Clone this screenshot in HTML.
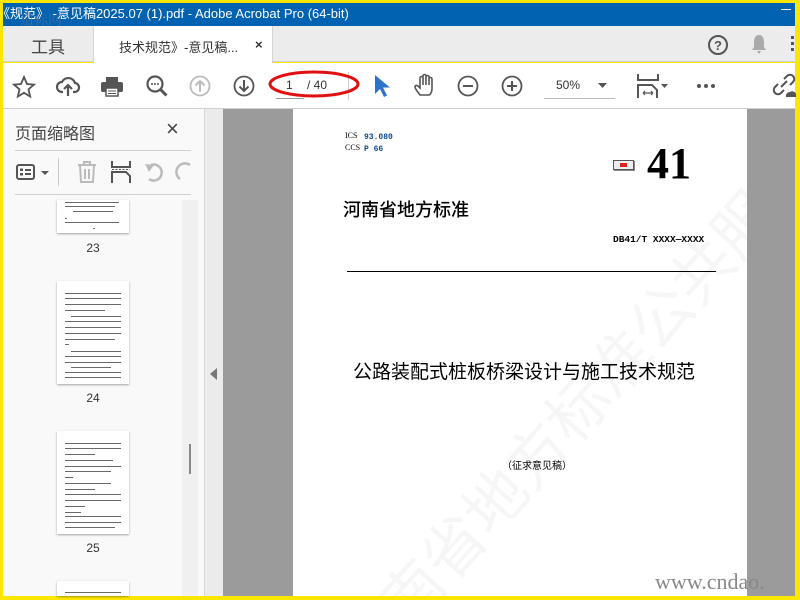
<!DOCTYPE html>
<html><head><meta charset="utf-8"><style>
*{margin:0;padding:0;box-sizing:border-box}
html,body{width:800px;height:600px;overflow:hidden}
body{background:#ffe600;position:relative;font-family:"Liberation Sans","Noto Sans CJK SC",sans-serif}
.a{position:absolute}
svg{position:absolute;overflow:visible}
.thumb{position:absolute;left:57px;width:72px;height:103px;background:#fff;box-shadow:0 1px 2px rgba(0,0,0,.35);overflow:hidden}
.thumb i{position:absolute;left:8px;height:1px;background:#444;display:block;opacity:.8}
.lbl{position:absolute;left:80px;width:26px;text-align:center;font-size:12px;color:#333}
</style></head><body>
<!-- title bar -->
<div class="a" style="left:3px;top:3px;width:792px;height:23px;background:#0062b0;color:#fff;font-size:13px;line-height:22px;white-space:nowrap;overflow:hidden"><span style="margin-left:-6px">《规范》 -意见稿2025.07 (1).pdf - Adobe Acrobat Pro (64-bit)</span></div>
<div class="a" style="left:781px;top:9px;width:10px;height:1px;background:#fff"></div>
<div class="a" style="left:20px;top:10px;font-size:14px;color:rgba(120,120,150,.5);font-family:'Liberation Serif','Noto Serif CJK SC',serif">道标网</div>
<!-- tab bar -->
<div class="a" style="left:3px;top:26px;width:792px;height:36px;background:#ececec;border-bottom:1px solid #cfcfcf"></div>
<div class="a" style="left:31px;top:33px;font-size:17px;color:#444">工具</div>
<div class="a" style="left:93px;top:26px;width:180px;height:37px;background:#fff;border-left:1px solid #d5d5d5;border-right:1px solid #d5d5d5"></div>
<div class="a" style="left:119px;top:37px;font-size:13px;color:#333">技术规范》-意见稿...</div>
<div class="a" style="left:255px;top:37px;font-size:13px;color:#333;font-weight:bold">×</div>
<svg style="left:707px;top:34px" width="22" height="22"><circle cx="11" cy="11" r="9" fill="none" stroke="#555" stroke-width="2"/><text x="11" y="16" font-size="13" text-anchor="middle" fill="#555" font-family="Liberation Sans" font-weight="bold">?</text></svg>
<svg style="left:750px;top:34px" width="18" height="20"><path d="M9 1c-4 0-5 4-5 7v5l-2 3h14l-2-3V8c0-3-1-7-5-7zM7 17h4l-2 3z" fill="#aaa"/></svg>
<div class="a" style="left:791px;top:36px;width:3px;height:3px;background:#555;box-shadow:0 6px #555,0 12px #555"></div>
<!-- toolbar -->
<div class="a" style="left:3px;top:63px;width:792px;height:46px;background:#fff;border-bottom:1px solid #d0d0d0"></div>
<svg style="left:12px;top:75px" width="24" height="24"><path d="M12 2l3 7 7 .6-5.5 4.7 1.7 7.2L12 17.8 5.8 21.5l1.7-7.2L2 9.6 9 9z" fill="none" stroke="#555" stroke-width="1.8"/></svg>
<svg style="left:56px;top:75px" width="24" height="24"><path d="M7 17H6a5 5 0 0 1 0-10 7 7 0 0 1 13 1 4.5 4.5 0 0 1-1 9h-1M12 21V11M8 14l4-4 4 4" fill="none" stroke="#555" stroke-width="2.2"/></svg>
<svg style="left:100px;top:74px" width="24" height="24"><rect x="6" y="3" width="12" height="5" fill="#555"/><rect x="1" y="8" width="22" height="10" rx="2" fill="#555"/><rect x="6" y="14" width="12" height="8" fill="#fff" stroke="#555" stroke-width="1.5"/><path d="M8 17h8M8 19.5h8" stroke="#555"/></svg>
<svg style="left:145px;top:74px" width="24" height="24"><circle cx="10" cy="10" r="7.5" fill="none" stroke="#555" stroke-width="2.2"/><path d="M15.5 15.5l6 6" stroke="#555" stroke-width="3"/><circle cx="7" cy="10" r="1" fill="#555"/><circle cx="10" cy="10" r="1" fill="#555"/><circle cx="13" cy="10" r="1" fill="#555"/></svg>
<svg style="left:189px;top:75px" width="22" height="22"><circle cx="11" cy="11" r="9.5" fill="none" stroke="#bbb" stroke-width="1.8"/><path d="M11 17V6M6.5 10.5 11 6l4.5 4.5" fill="none" stroke="#bbb" stroke-width="2"/></svg>
<svg style="left:233px;top:75px" width="22" height="22"><circle cx="11" cy="11" r="9.5" fill="none" stroke="#555" stroke-width="1.8"/><path d="M11 5v11M6.5 11.5 11 16l4.5-4.5" fill="none" stroke="#555" stroke-width="2"/></svg>
<div class="a" style="left:276px;top:98px;width:28px;height:1px;background:#999"></div>
<div class="a" style="left:286px;top:78px;font-size:12px;color:#333">1</div>
<div class="a" style="left:307px;top:78px;font-size:12px;color:#333">/ 40</div>
<div class="a" style="left:348px;top:72px;width:1px;height:28px;background:#ccc"></div>
<svg style="left:268px;top:70px" width="94" height="30"><ellipse cx="46" cy="14" rx="44" ry="12" fill="none" stroke="#e01010" stroke-width="3"/></svg>
<svg style="left:373px;top:74px" width="16" height="24"><path d="M2 1v19l5-5 4 8 3-1.5-4-8h7z" fill="#2d72c8"/></svg>
<svg style="left:412px;top:73px" width="26" height="26"><path d="M8 22c-2-3-5-6-5-8 0-1.5 1.5-2 3-1l2 2V5a1.5 1.5 0 0 1 3 0v7V3a1.5 1.5 0 0 1 3 0v9V4a1.5 1.5 0 0 1 3 0v8V6a1.5 1.5 0 0 1 3 0v10c0 3-2 6-3 6z" fill="none" stroke="#555" stroke-width="1.6"/></svg>
<svg style="left:457px;top:75px" width="22" height="22"><circle cx="11" cy="11" r="9.5" fill="none" stroke="#555" stroke-width="1.8"/><path d="M6 11h10" stroke="#555" stroke-width="2"/></svg>
<svg style="left:501px;top:75px" width="22" height="22"><circle cx="11" cy="11" r="9.5" fill="none" stroke="#555" stroke-width="1.8"/><path d="M6 11h10M11 6v10" stroke="#555" stroke-width="2"/></svg>
<div class="a" style="left:556px;top:78px;font-size:12px;color:#333">50%</div>
<svg style="left:598px;top:83px" width="10" height="6"><path d="M0 0h9l-4.5 5z" fill="#555"/></svg>
<div class="a" style="left:544px;top:98px;width:71px;height:1px;background:#bbb"></div>
<svg style="left:636px;top:73px" width="30" height="27"><path d="M2 1v6h20V1M2 25v-13h14l5 5v8" fill="none" stroke="#555" stroke-width="2"/><path d="M7 20h10M7 20l2-2M7 20l2 2M17 20l-2-2M17 20l-2 2" stroke="#555" stroke-width="1.2"/><path d="M25 11h7l-3.5 4z" fill="#555"/></svg>
<div class="a" style="left:697px;top:84px;width:4px;height:4px;border-radius:2px;background:#555;box-shadow:7px 0 #555,14px 0 #555"></div>
<svg style="left:772px;top:73px" width="24" height="26"><path d="M9 14l6-6M6 11l-3 3a4 4 0 0 0 6 6l3-3M12 6l3-3a4 4 0 0 1 6 6l-3 3" fill="none" stroke="#555" stroke-width="2"/><path d="M14 24a4 4 0 0 1 4-5 4 4 0 0 1 6 2v3z" fill="#555"/></svg>
<!-- sidebar -->
<div class="a" style="left:3px;top:109px;width:202px;height:487px;background:#f9f9f9;border-right:1px solid #d8d8d8"></div>
<div class="a" style="left:15px;top:120px;font-size:16px;color:#444">页面缩略图</div>
<div class="a" style="left:166px;top:116px;font-size:22px;color:#444">×</div>
<div class="a" style="left:15px;top:150px;width:176px;height:1px;background:#cfcfcf"></div>
<div class="a" style="left:15px;top:194px;width:176px;height:1px;background:#cfcfcf"></div>
<svg style="left:16px;top:162px" width="40" height="22"><rect x="1" y="3" width="17" height="14" rx="2" fill="none" stroke="#555" stroke-width="2"/><rect x="4" y="6.5" width="3" height="2.5" fill="#555"/><rect x="4" y="11" width="3" height="2.5" fill="#555"/><path d="M9 8h6M9 12h6" stroke="#555" stroke-width="2"/><path d="M25 9h8l-4 4z" fill="#555"/></svg>
<div class="a" style="left:58px;top:158px;width:1px;height:28px;background:#ccc"></div>
<svg style="left:76px;top:160px" width="22" height="24"><path d="M2 5h18M8 5V2h6v3M4 5l1 17h12l1-17M9 9v10M13 9v10" fill="none" stroke="#bbb" stroke-width="2"/></svg>
<svg style="left:110px;top:160px" width="22" height="24"><path d="M2 1v6h18V1M2 23V12h14l4 4v7" fill="none" stroke="#555" stroke-width="2"/><path d="M2 9.5h18" stroke="#555" stroke-dasharray="2 1.5"/></svg>
<svg style="left:143px;top:161px" width="22" height="22"><path d="M8 4a8 8 0 1 1-2 14" fill="none" stroke="#bbb" stroke-width="2.5"/><path d="M2 3l9 1-5 7z" fill="#bbb"/></svg>
<svg style="left:176px;top:161px" width="16" height="22"><path d="M14 4a8 8 0 0 0-10 14" fill="none" stroke="#bbb" stroke-width="2.5"/></svg>
<div class="a" style="left:182px;top:200px;width:16px;height:396px;background:#f0f0f0"></div>
<div class="a" style="left:189px;top:444px;width:2px;height:30px;background:#888"></div>
<div class="thumb" style="top:200px;height:33px"><i style="top:2px;width:54px"></i><i style="top:6px;width:50px"></i><i style="top:11px;left:16px;width:40px"></i><i style="top:18px;width:2px"></i><i style="top:22px;width:54px"></i><i style="top:28px;left:36px;width:2px"></i></div>
<div class="lbl" style="top:241px">23</div>
<div class="thumb" style="top:281px"><i style="top:12px;width:56px"></i><i style="top:17px;width:56px"></i><i style="top:23px;width:56px"></i><i style="top:29px;width:40px"></i><i style="top:35px;left:14px;width:50px"></i><i style="top:40px;width:56px"></i><i style="top:46px;width:56px"></i><i style="top:52px;width:56px"></i><i style="top:58px;width:50px"></i><i style="top:63px;width:4px"></i><i style="top:70px;left:14px;width:50px"></i><i style="top:75px;width:56px"></i><i style="top:81px;width:56px"></i><i style="top:86px;left:14px;width:40px"></i><i style="top:91px;width:56px"></i><i style="top:96px;width:56px"></i></div>
<div class="lbl" style="top:391px">24</div>
<div class="thumb" style="top:431px"><i style="top:12px;width:56px"></i><i style="top:17px;width:56px"></i><i style="top:23px;width:30px"></i><i style="top:29px;width:48px"></i><i style="top:35px;width:56px"></i><i style="top:40px;width:46px"></i><i style="top:46px;width:8px"></i><i style="top:52px;width:46px"></i><i style="top:58px;width:30px"></i><i style="top:63px;width:56px"></i><i style="top:69px;width:56px"></i><i style="top:75px;width:20px"></i><i style="top:81px;width:16px"></i><i style="top:85px;width:56px"></i><i style="top:91px;width:56px"></i><i style="top:96px;width:50px"></i></div>
<div class="lbl" style="top:541px">25</div>
<div class="thumb" style="top:581px;height:15px"><i style="top:11px;width:56px"></i></div>
<!-- splitter -->
<div class="a" style="left:205px;top:109px;width:18px;height:487px;background:#ebebeb"></div>
<svg style="left:210px;top:368px" width="8" height="12"><path d="M7 0v12L0 6z" fill="#777"/></svg>
<!-- doc area -->
<div class="a" style="left:223px;top:109px;width:572px;height:487px;background:#9b9b9b"></div>
<div class="a" style="left:293px;top:109px;width:454px;height:487px;background:#fff;overflow:hidden">
<div class="a" style="left:20px;top:520px;font-size:62px;color:rgba(0,0,0,.035);transform:rotate(-48deg);transform-origin:0 0;white-space:nowrap;font-family:'Liberation Sans','Noto Sans CJK SC',sans-serif">河南省地方标准公共服务平台</div>
<div class="a" style="left:52px;top:22px;font-size:8px;color:#000;font-family:'Liberation Serif',serif">ICS</div>
<div class="a" style="left:71px;top:24px;font-size:8px;color:#0a4a8a;font-family:'Liberation Mono',monospace;font-weight:bold">93.080</div>
<div class="a" style="left:52px;top:34px;font-size:8px;color:#000;font-family:'Liberation Serif',serif">CCS</div>
<div class="a" style="left:71px;top:36px;font-size:8px;color:#0a4a8a;font-family:'Liberation Mono',monospace;font-weight:bold">P 66</div>
<div class="a" style="left:320px;top:51px;width:21px;height:10px;border:1px solid #555;background:#eee;box-shadow:1px 1px 0 #888"><div style="position:absolute;left:6px;top:2px;width:7px;height:4px;background:#e02020"></div></div>
<div class="a" style="left:354px;top:31px;font-size:44px;font-weight:bold;font-family:'Liberation Serif',serif;color:#000;line-height:1.1">41</div>
<div class="a" style="left:50px;top:87px;font-size:18px;color:#000;font-weight:500">河南省地方标准</div>
<div class="a" style="left:320px;top:125px;font-size:9.5px;color:#000;font-family:'Liberation Mono',monospace;font-weight:bold">DB41/T XXXX—XXXX</div>
<div class="a" style="left:54px;top:162px;width:369px;height:1px;background:#000"></div>
<div class="a" style="left:60px;width:380px;top:248px;font-size:19px;color:#000;white-space:nowrap">公路装配式桩板桥梁设计与施工技术规范</div>
<div class="a" style="left:209px;top:348px;font-size:10px;color:#000;white-space:nowrap">（征求意见稿）</div>
</div>
<div class="a" style="left:655px;top:569px;font-size:22px;line-height:26px;color:#888;font-family:'Liberation Serif',serif;white-space:nowrap">www.cndao.</div>
</body></html>
